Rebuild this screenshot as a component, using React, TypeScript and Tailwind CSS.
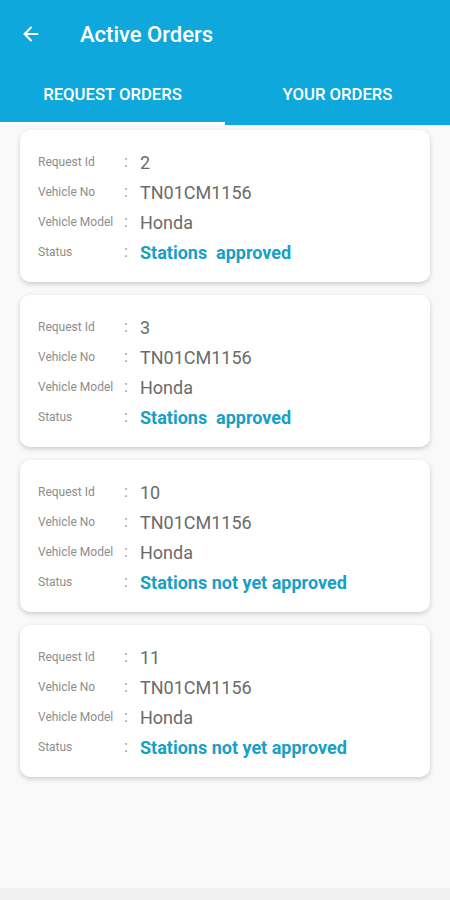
import { ArrowLeft } from "lucide-react";

const orders = [
  { id: "2", no: "TN01CM1156", model: "Honda", status: "Stations  approved" },
  { id: "3", no: "TN01CM1156", model: "Honda", status: "Stations  approved" },
  { id: "10", no: "TN01CM1156", model: "Honda", status: "Stations not yet approved" },
  { id: "11", no: "TN01CM1156", model: "Honda", status: "Stations not yet approved" },
];

const Row: React.FC<{ label: string; value: string; status?: boolean }> = ({ label, value, status }) => (
  <div className="flex items-center h-[30px]">
    <span className="w-[86px] text-[12px] text-[#8d8d8d]">{label}</span>
    <span className="w-[16px] text-[16px] text-[#9a9a9a]">:</span>
    {status ? (
      <span className="text-[18px] font-bold text-[#179fc6] whitespace-pre">{value}</span>
    ) : (
      <span className="text-[18px] text-[#6b6b6b]">{value}</span>
    )}
  </div>
);

export default function App() {
  return (
    <div className="w-[450px] h-[900px] flex flex-col bg-[#f9f9f9] font-['Roboto',sans-serif] overflow-hidden">
      <div className="bg-[#0fa8dc] text-white">
        <div className="flex items-center h-[68px] px-5">
          <ArrowLeft className="w-[22px] h-[22px]" strokeWidth={2.2} />
          <h1 className="ml-[38px] text-[22px] font-medium">Active Orders</h1>
        </div>
        <div className="flex h-[57px]">
          <div className="flex-1 flex flex-col">
            <div className="flex-1 flex items-center justify-center text-[16.7px] font-medium">REQUEST ORDERS</div>
            <div className="h-[3px] bg-white" />
          </div>
          <div className="flex-1 flex flex-col">
            <div className="flex-1 flex items-center justify-center text-[16.7px] font-medium">YOUR ORDERS</div>
            <div className="h-[3px]" />
          </div>
        </div>
      </div>
      <div className="flex-1 flex flex-col gap-[13px] px-5 pt-[5px]">
        {orders.map((o) => (
          <div
            key={o.id}
            className="bg-white rounded-[10px] shadow-[0_2px_5px_rgba(0,0,0,0.18)] h-[152px] pl-[18px] pt-[17px]"
          >
            <Row label="Request Id" value={o.id} />
            <Row label="Vehicle No" value={o.no} />
            <Row label="Vehicle Model" value={o.model} />
            <Row label="Status" value={o.status} status />
          </div>
        ))}
      </div>
      <div className="h-[12px] bg-[#f1f1f1]" />
    </div>
  );
}
